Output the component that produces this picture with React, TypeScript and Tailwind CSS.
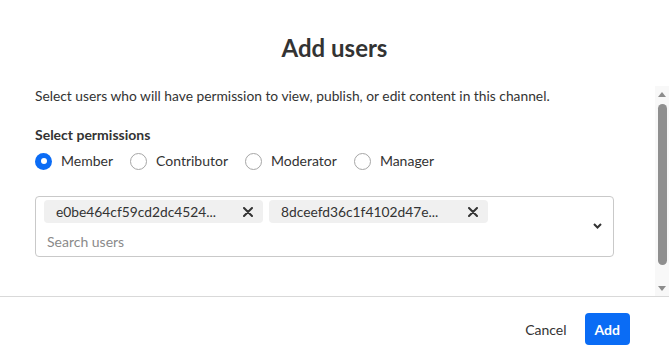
import { useState } from "react"

type Role = "member" | "contributor" | "moderator" | "manager"

const ROLES: { value: Role; label: string }[] = [
  { value: "member", label: "Member" },
  { value: "contributor", label: "Contributor" },
  { value: "moderator", label: "Moderator" },
  { value: "manager", label: "Manager" },
]

const USERS = ["e0be464cf59cd2dc4524...", "8dceefd36c1f4102d47e..."]

function CloseIcon() {
  return (
    <svg width="10" height="10" viewBox="0 0 10 10" className="text-[#333]">
      <path d="M1 1 L9 9 M9 1 L1 9" stroke="currentColor" strokeWidth="2" strokeLinecap="round" />
    </svg>
  )
}

function Chip({ label }: { label: string }) {
  return (
    <div className="flex h-[23px] w-[219px] items-center justify-between rounded-[4px] bg-[#f0f0f0] pl-[12px] pr-[10px]">
      <span className="text-[13.8px] leading-[18px] text-[#333]">{label}</span>
      <CloseIcon />
    </div>
  )
}

// drawn scrollbar (headless browser hides the native one)
function ScrollBar() {
  return (
    <div className="flex w-[14px] shrink-0 flex-col items-center bg-[#f8f8f8] pt-[6px] pb-[5px]">
      <svg width="8" height="5" viewBox="0 0 8 5">
        <path d="M4 0 L8 5 L0 5 Z" fill="#8c8c8c" />
      </svg>
      <div className="mt-[7px] h-[161px] w-[9px] rounded-full bg-[#8f8f8f]" />
      <div className="flex-1" />
      <svg width="8" height="5" viewBox="0 0 8 5">
        <path d="M0 0 L8 0 L4 5 Z" fill="#8c8c8c" />
      </svg>
    </div>
  )
}

export default function App() {
  const [role, setRole] = useState<Role>("member")

  return (
    <div className="flex h-[355px] w-[669px] flex-col bg-white font-['Lato',sans-serif] text-[#333]">
      {/* header */}
      <div className="flex h-[86px] shrink-0 items-center justify-center pt-[10px]">
        <h1 className="text-[24px] font-bold leading-[28px] text-[#333]">Add users</h1>
      </div>

      {/* body */}
      <div className="flex h-[210px] shrink-0">
        <div className="flex-1 overflow-hidden pl-[35px] pr-[41px]">
          <p className="text-[13.8px] leading-[20px]">
            Select users who will have permission to view, publish, or edit content in this channel.
          </p>
          <p className="mt-[19px] text-[14px] font-bold leading-[20px]">Select permissions</p>

          <div className="mt-[6px] flex h-[20px] items-center gap-[17px]">
            {ROLES.map((r) => {
              const checked = role === r.value
              return (
                <label key={r.value} className="flex cursor-pointer items-center gap-[9px]">
                  <input
                    type="radio"
                    name="role"
                    value={r.value}
                    checked={checked}
                    onChange={() => setRole(r.value)}
                    className="sr-only"
                  />
                  {checked ? (
                    <span className="flex size-[17px] items-center justify-center rounded-full bg-[#0b6cf5]">
                      <span className="size-[6px] rounded-full bg-white" />
                    </span>
                  ) : (
                    <span className="size-[17px] rounded-full border border-[#a6a6a6] bg-white" />
                  )}
                  <span className="text-[14px] leading-[20px] text-[#333]">{r.label}</span>
                </label>
              )
            })}
          </div>

          <div className="mt-[25px] flex items-center rounded-[4px] border border-[#c9c9c9] pb-[3px] pl-[8px] pr-[11px] pt-[3px]">
            <div className="flex-1">
              <div className="flex gap-[6px]">
                {USERS.map((u) => (
                  <Chip key={u} label={u} />
                ))}
              </div>
              <input
                placeholder="Search users"
                className="mt-[8px] h-[20px] w-full pl-[3px] text-[14px] text-[#333] outline-none placeholder:text-[#8a8a8a]"
              />
            </div>
            <svg width="9" height="6" viewBox="0 0 9 6" className="text-[#333]">
              <path d="M1 1 L4.5 4.5 L8 1" fill="none" stroke="currentColor" strokeWidth="2" />
            </svg>
          </div>
        </div>
        <ScrollBar />
      </div>

      {/* footer */}
      <div className="flex flex-1 items-start justify-end border-t border-[#d9d9d9] pr-[39px] pt-[16px]">
        <button className="h-[32px] px-[9px] text-[14px] text-[#333]">Cancel</button>
        <button className="ml-[9px] h-[32px] rounded-[4px] bg-[#0a6cf5] px-[10px] text-[14px] font-bold text-white">
          Add
        </button>
      </div>
    </div>
  )
}
